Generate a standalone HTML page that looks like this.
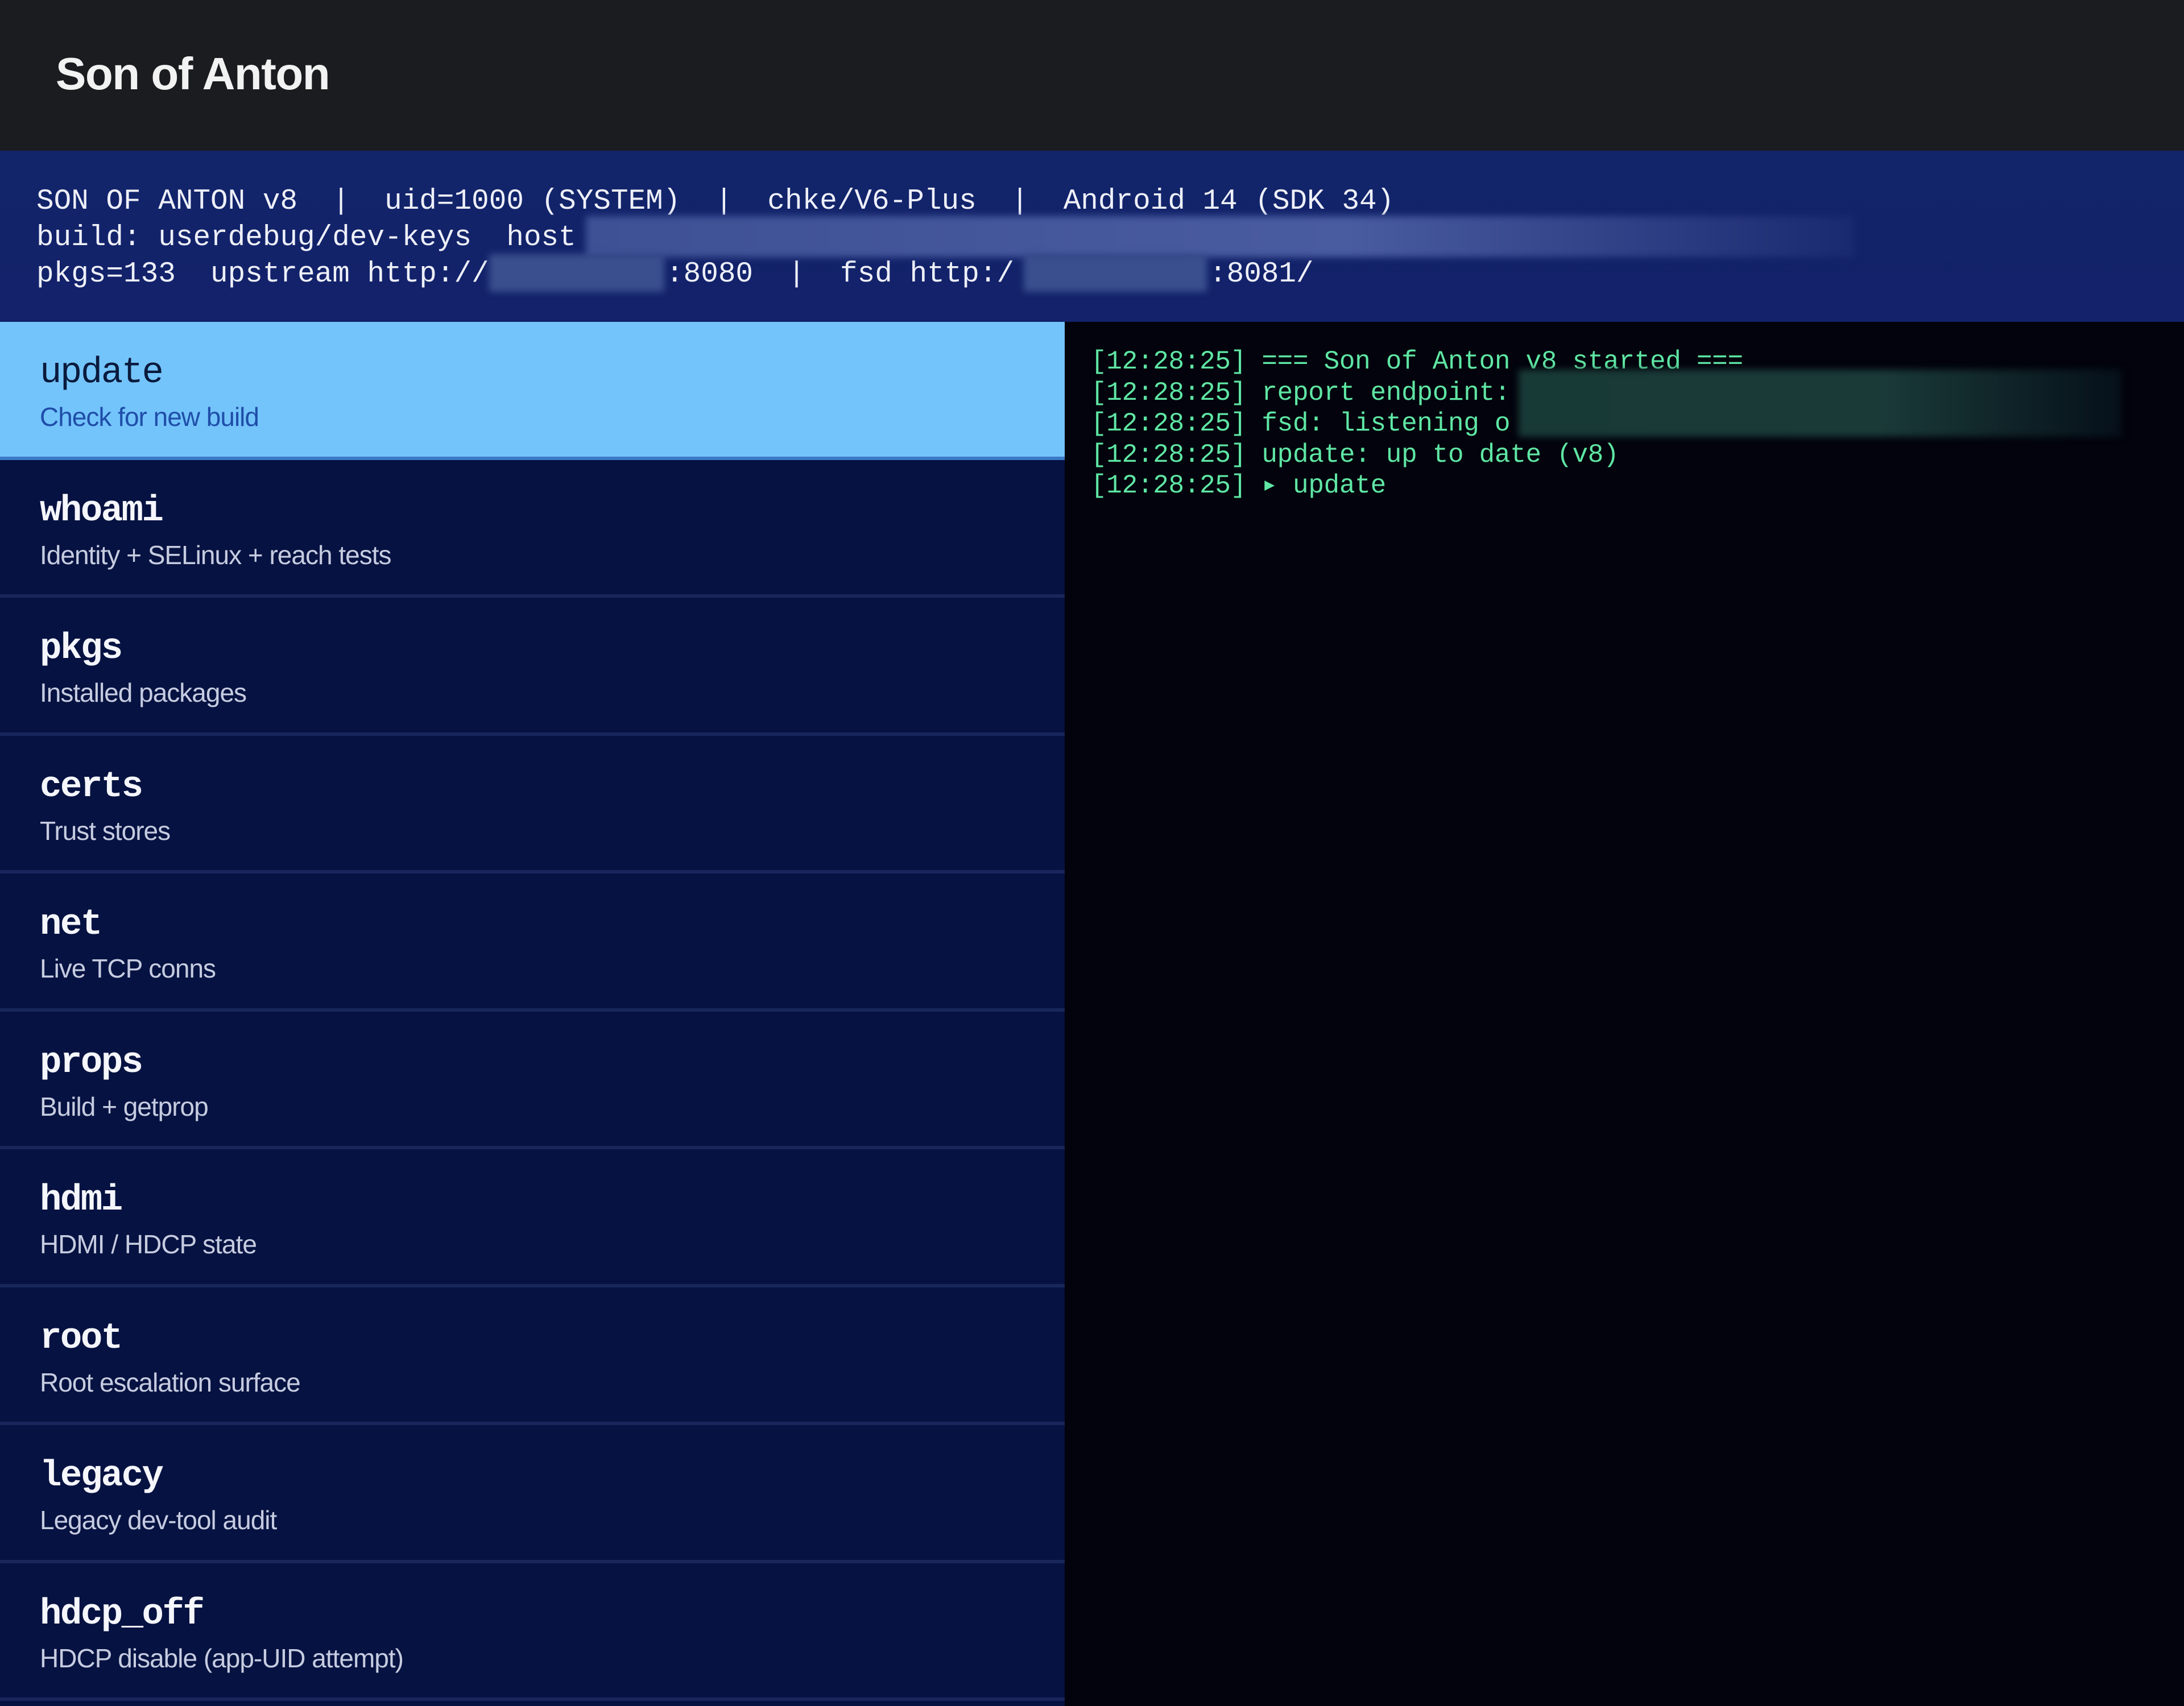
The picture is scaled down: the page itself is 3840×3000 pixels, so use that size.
<!DOCTYPE html>
<html><head><meta charset="utf-8"><style>
*{margin:0;padding:0;box-sizing:border-box}
body{width:3840px;height:3000px;overflow:hidden;background:#02030c;position:relative;font-family:"Liberation Sans",sans-serif}
.top{position:absolute;left:0;top:0;width:3840px;height:265px;background:#1a1c1f}
.top h1{position:absolute;left:98px;top:84px;font-size:80px;font-weight:bold;color:#f2f2f2;letter-spacing:-1.5px}
.hdr{position:absolute;left:0;top:265px;width:3840px;height:301px;background:linear-gradient(#12246a,#13226a)}
.hdr .l{position:absolute;font-family:"Liberation Mono",monospace;font-size:51px;line-height:64px;color:#eef0f8;letter-spacing:0px;white-space:pre}
.blur{position:absolute;background:#3a4f8e;filter:blur(6px)}
.list{position:absolute;left:0;top:566px;width:1872px;height:2434px;background:#061241}
.row{height:242.5px;border-bottom:6px solid #18265c;position:relative}
.row .t{position:absolute;left:70px;top:54px;font-family:"Liberation Mono",monospace;font-weight:bold;font-size:64px;color:#f4f6fb;letter-spacing:-2.5px}
.row .s{position:absolute;left:70px;top:140px;font-size:46px;color:#c6cce0;letter-spacing:-1px}
.row.sel{background:#74c4fc;border-bottom:6px solid #3c7ac8}
.row.sel .t{color:#0a1a3c;font-weight:normal}
.row.sel .s{color:#1f4ea8}
.log{position:absolute;left:1918px;top:609px;font-family:"Liberation Mono",monospace;font-size:46px;line-height:54.5px;color:#5fe6a4;letter-spacing:-0.3px;white-space:pre}
</style></head><body>
<div class="top"><h1>Son of Anton</h1></div>
<div class="hdr">
<div class="l" style="left:64px;top:58px">SON OF ANTON v8  |  uid=1000 (SYSTEM)  |  chke/V6-Plus  |  Android 14 (SDK 34)</div>
<div class="l" style="left:64px;top:122px">build: userdebug/dev-keys  host</div>
<div class="l" style="left:64px;top:186px">pkgs=133  upstream http://</div>
<div class="l" style="left:1171px;top:186px">:8080  |  fsd http:/</div>
<div class="l" style="left:2126px;top:186px">:8081/</div>
<div class="blur" style="left:1030px;top:115px;width:2230px;height:72px;background:linear-gradient(90deg,#3e5194,#4a5ca0 60%,#1a2a70)"></div>
<div class="blur" style="left:860px;top:182px;width:308px;height:66px"></div>
<div class="blur" style="left:1800px;top:182px;width:322px;height:66px"></div>
</div>
<div class="list">
<div class="row sel"><div class="t">update</div><div class="s">Check for new build</div></div>
<div class="row"><div class="t">whoami</div><div class="s">Identity + SELinux + reach tests</div></div>
<div class="row"><div class="t">pkgs</div><div class="s">Installed packages</div></div>
<div class="row"><div class="t">certs</div><div class="s">Trust stores</div></div>
<div class="row"><div class="t">net</div><div class="s">Live TCP conns</div></div>
<div class="row"><div class="t">props</div><div class="s">Build + getprop</div></div>
<div class="row"><div class="t">hdmi</div><div class="s">HDMI / HDCP state</div></div>
<div class="row"><div class="t">root</div><div class="s">Root escalation surface</div></div>
<div class="row"><div class="t">legacy</div><div class="s">Legacy dev-tool audit</div></div>
<div class="row"><div class="t">hdcp_off</div><div class="s">HDCP disable (app-UID attempt)</div></div>
</div>
<div class="log">[12:28:25] === Son of Anton v8 started ===
[12:28:25] report endpoint:
[12:28:25] fsd: listening o
[12:28:25] update: up to date (v8)
[12:28:25] ▸ update</div>
<div class="blur" style="left:2670px;top:650px;width:1060px;height:118px;background:linear-gradient(90deg,#183a36,#1a3a38 60%,#06101a)"></div>
</body></html>
